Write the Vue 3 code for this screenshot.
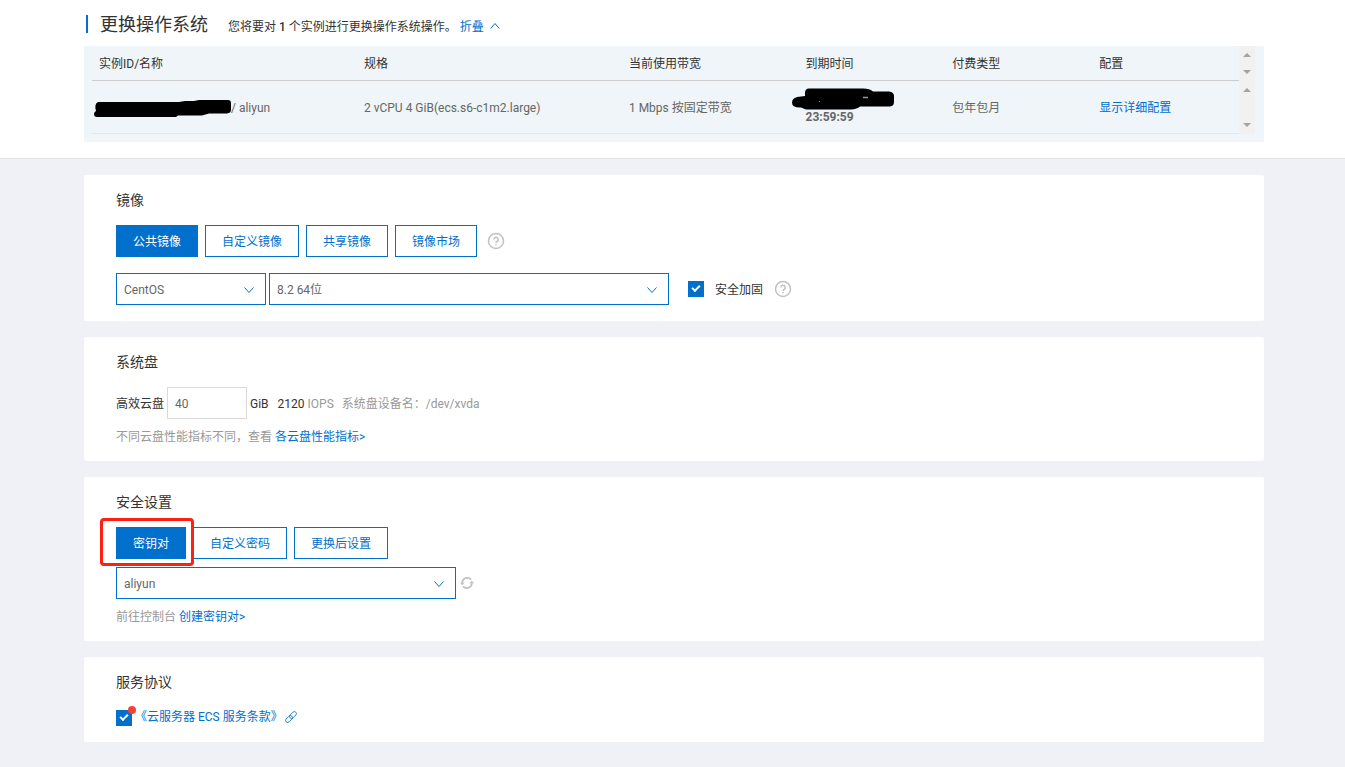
<script setup>
import { ref } from 'vue'

const columns = ['实例ID/名称', '规格', '当前使用带宽', '到期时间', '付费类型', '配置']
const imageTypes = ['公共镜像', '自定义镜像', '共享镜像', '镜像市场']
const loginTypes = ['密钥对', '自定义密码', '更换后设置']

const imageType = ref(0)
const loginType = ref(0)
const system = ref('CentOS')
const version = ref('8.2 64位')
const keyPair = ref('aliyun')
const diskSize = ref('40')
const hardened = ref(true)
const agreed = ref(true)
</script>

<template>
  <header class="top">
    <div class="wrap">
      <div class="heading">
        <h1>更换操作系统</h1>
        <p>您将要对 <b>1</b> 个实例进行更换操作系统操作。</p>
        <button type="button" class="fold">
          折叠
          <svg width="10" height="8" viewBox="0 0 10 8"><path d="M.7 6.500L5 1.500l4.300 5" fill="none" stroke="currentColor" /></svg>
        </button>
      </div>
      <div class="instances">
        <table>
          <thead>
            <tr><th v-for="c in columns" :key="c" scope="col">{{ c }}</th></tr>
          </thead>
          <tbody>
            <tr>
              <td>
                <span class="masked-id">
                  <svg class="id-stroke" width="140" height="20" viewBox="0 0 140 20">
                    <path d="M5 4H86L92 3H101L106 2H135Q138 2 138 5V12Q138 15 134 15.500H116L109 17.500H85L83 19H4Q1 19 1 16Q1 14 3 13Q1 6 5 4Z" />
                  </svg>
                </span>/ aliyun
              </td>
              <td>2 vCPU 4 GiB(ecs.s6-c1m2.large)</td>
              <td>1 Mbps 按固定带宽</td>
              <td>
                <div class="expiry">
                  <svg class="date-stroke" width="104" height="24" viewBox="0 0 104 24">
                    <path d="M18 1.500H72Q79 1.500 82 4.500H98Q103 5 103 9V15Q103 19 99 19.500H69Q66 22 60 22.500H15L10 20.500Q1 21 1 15.500Q1 10 10 9.500L14 9V6Q14 1.500 18 1.500Z" />
                    <path d="M72 10.500H77" stroke="#999" stroke-width="1.500" />
                    <path d="M28 14.500H29" stroke="#777" />
                  </svg>
                  <b>23:59:59</b>
                </div>
              </td>
              <td>包年包月</td>
              <td><a href="#">显示详细配置</a></td>
            </tr>
          </tbody>
        </table>
        <div class="tracks" aria-hidden="true">
          <div class="track head"><i class="up"></i><i class="down"></i></div>
          <div class="track body"><i class="up"></i><i class="down"></i></div>
        </div>
      </div>
    </div>
  </header>

  <main class="wrap cards">
    <section class="card">
      <h2>镜像</h2>
      <div class="row">
        <button v-for="(t, i) in imageTypes" :key="t" type="button" class="tab" :class="{ active: imageType === i }" @click="imageType = i">{{ t }}</button>
        <svg class="help" width="18" height="18" viewBox="0 0 18 18"><circle cx="9" cy="9" r="7.500" /><path d="M6.800 7.400a2.200 2.200 0 1 1 3.300 1.900c-.8.500-1.100.8-1.100 1.700M9 12v1.300" /></svg>
      </div>
      <div class="row selects">
        <div class="select system">
          <select v-model="system" aria-label="操作系统"><option>CentOS</option></select>
          <svg width="12" height="8" viewBox="0 0 12 8"><path d="M1.500 1.500l4.500 5 4.500-5" /></svg>
        </div>
        <div class="select version">
          <select v-model="version" aria-label="版本"><option>8.2 64位</option></select>
          <svg width="12" height="8" viewBox="0 0 12 8"><path d="M1.500 1.500l4.500 5 4.500-5" /></svg>
        </div>
        <label class="check harden"><input v-model="hardened" type="checkbox" /><span>安全加固</span></label>
        <svg class="help" width="18" height="18" viewBox="0 0 18 18"><circle cx="9" cy="9" r="7.500" /><path d="M6.800 7.400a2.200 2.200 0 1 1 3.300 1.900c-.8.500-1.100.8-1.100 1.700M9 12v1.300" /></svg>
      </div>
    </section>

    <section class="card">
      <h2>系统盘</h2>
      <div class="row disk">
        <label for="disk">高效云盘</label>
        <input id="disk" v-model="diskSize" type="text" />
        <span>GiB</span>
        <span class="iops">2120 <em>IOPS</em></span>
        <em class="device">系统盘设备名：/dev/xvda</em>
      </div>
      <p class="hint">不同云盘性能指标不同，查看 <a href="#">各云盘性能指标&gt;</a></p>
    </section>

    <section class="card">
      <h2>安全设置</h2>
      <div class="row login">
        <button v-for="(t, i) in loginTypes" :key="t" type="button" class="tab" :class="{ active: loginType === i }" @click="loginType = i">{{ t }}</button>
        <span class="marker"></span>
      </div>
      <div class="row keys">
        <div class="select pair">
          <select v-model="keyPair" aria-label="密钥对"><option>aliyun</option></select>
          <svg width="12" height="8" viewBox="0 0 12 8"><path d="M1.500 1.500l4.500 5 4.500-5" /></svg>
        </div>
        <button type="button" class="refresh" aria-label="刷新">
          <svg width="14" height="14" viewBox="0 0 14 14"><path d="M2.200 6.500a5 5 0 0 1 8.800-2.800M11.800 7.500a5 5 0 0 1-8.800 2.800" fill="none" stroke="#c1c1c1" stroke-width="1.800" /><path d="M0 6.500h4.600L2.200 9.500zM14 7.500H9.400L11.800 4.500z" fill="#c1c1c1" /></svg>
        </button>
      </div>
      <p class="hint">前往控制台 <a href="#">创建密钥对&gt;</a></p>
    </section>

    <section class="card">
      <h2>服务协议</h2>
      <div class="row agreement">
        <span class="check dotted"><input v-model="agreed" type="checkbox" aria-label="同意服务条款" /></span>
        <a href="#">《云服务器 ECS 服务条款》
          <svg width="12" height="12" viewBox="0 0 12 12"><g fill="none" stroke="currentColor" stroke-width=".8" transform="rotate(-45 6 6)"><rect x="-.8" y="4" width="8" height="4" rx="2" /><rect x="4.800" y="4" width="8" height="4" rx="2" /></g></svg>
        </a>
      </div>
    </section>
  </main>
</template>

<style>
body {
  margin: 0;
  background: #eff1f6;
}
</style>

<style scoped>
.top, .cards {
  font: 12px/18px Roboto, "Noto Sans CJK SC", sans-serif;
  color: #333;
}
.top {
  background: #fff;
  border-bottom: 1px solid #e5e5e5;
  padding-bottom: 16px;
}
.wrap {
  margin: 0 81px 0 84px;
}
h1, h2, p {
  margin: 0;
  font-weight: 400;
}
a {
  color: #0070cc;
  text-decoration: none;
}
em {
  font-style: normal;
  color: #999;
}
button {
  font: inherit;
  cursor: pointer;
}
.heading {
  display: flex;
  align-items: center;
  height: 46px;
  padding: 2px 0 0 2px;
  box-sizing: border-box;
}
.heading h1 {
  font-size: 18px;
  line-height: 20px;
  height: 18px;
  border-left: 2px solid #0070cc;
  padding-left: 12px;
  margin-right: 20px;
}
.heading p {
  padding-top: 6px;
}
.heading b {
  font-weight: 500;
}
.fold {
  display: flex;
  align-items: center;
  gap: 6px;
  padding: 6px 0 0;
  margin-left: 3px;
  border: 0;
  background: none;
  color: #0070cc;
}
.fold svg {
  margin-bottom: 2px;
}
.instances {
  display: flex;
  align-items: flex-start;
  background: #eff5f8;
  padding: 0 9px 8px 8px;
}
table {
  flex: 1;
  table-layout: fixed;
  border-collapse: separate;
  border-spacing: 0;
}
th, td {
  box-sizing: border-box;
  text-align: left;
  font-weight: 400;
  padding: 2px 0 0 7px;
  width: 12.8%;
}
th {
  height: 35px;
  border-bottom: 1px solid #ccc;
}
td {
  height: 53px;
  border-bottom: 1px solid #e3e8ea;
  color: #666;
}
th:nth-child(-n+2) {
  width: 23.1%;
}
th:nth-child(3) {
  width: 15.4%;
}
.masked-id {
  display: inline-block;
  position: relative;
  width: 132px;
  height: 12px;
}
.id-stroke {
  position: absolute;
  left: -6px;
  top: -2px;
}
.expiry {
  position: relative;
  padding-top: 18px;
}
.date-stroke {
  position: absolute;
  left: -15px;
  top: -3px;
}
.tracks {
  width: 16px;
}
.track {
  display: flex;
  flex-direction: column;
  align-items: center;
  justify-content: space-between;
  box-sizing: border-box;
  padding: 7px 0;
  background: #f1f1f1;
}
.track.head {
  height: 35px;
}
.track.body {
  height: 53px;
}
.track i {
  border: 4px solid transparent;
}
.track .up {
  border-top: 0;
  border-bottom-color: #a3a3a3;
}
.track .down {
  border-bottom: 0;
  border-top-color: #a3a3a3;
}
.cards {
  display: flex;
  flex-direction: column;
  gap: 16px;
  padding: 16px 0 24px;
}
.card {
  background: #fff;
  border-radius: 2px;
  padding: 16px 32px;
}
h2 {
  font-size: 14px;
  line-height: 18px;
  margin-bottom: 16px;
}
.row {
  display: flex;
  align-items: center;
  position: relative;
}
.tab {
  height: 32px;
  padding: 2px 16px 0;
  margin-right: 7px;
  border: 1px solid #0070cc;
  background: #fff;
  color: #0070cc;
}
.tab.active {
  background: #0070cc;
  color: #fff;
}
.help {
  fill: none;
  stroke: #c1c1c1;
  stroke-width: 1.500;
  margin-left: 3px;
}
.selects {
  margin-top: 16px;
}
.select {
  position: relative;
  margin-right: 3px;
}
.select select {
  appearance: none;
  width: 100%;
  height: 32px;
  padding: 2px 28px 0 7px;
  border: 1px solid #0070cc;
  border-radius: 0;
  background: #fff;
  color: #666;
  font: inherit;
  display: block;
}
.select svg {
  position: absolute;
  right: 11px;
  top: 13px;
  fill: none;
  stroke: #0070cc;
  stroke-width: 1;
  pointer-events: none;
}
.system {
  width: 150px;
}
.version {
  width: 400px;
}
.pair {
  width: 340px;
}
.check {
  display: flex;
  align-items: center;
  gap: 11px;
  position: relative;
}
.check span {
  padding-top: 2px;
}
.check input {
  appearance: none;
  width: 16px;
  height: 16px;
  margin: 0;
  border: 1px solid #0070cc;
  background: #fff;
  position: relative;
}
.check input:checked {
  background: #0070cc;
}
.check input:checked::after {
  content: "";
  position: absolute;
  left: 3px;
  top: 3px;
  width: 6px;
  height: 3px;
  border: solid #fff;
  border-width: 0 0 2px 2px;
  transform: rotate(-45deg);
}
.harden {
  margin: 0 8px 0 16px;
}
.disk label, .disk span, .disk .device {
  padding-top: 2px;
}
.disk input {
  box-sizing: border-box;
  width: 80px;
  height: 32px;
  margin: 0 3px;
  padding: 2px 7px 0;
  border: 1px solid #d9d9d9;
  font: inherit;
  color: #666;
}
.iops {
  margin-left: 9px;
}
.device {
  margin-left: 8px;
}
.hint {
  margin-top: 9px;
  margin-bottom: -1px;
  color: #999;
}
.marker {
  position: absolute;
  left: -16px;
  top: -9px;
  width: 88px;
  height: 42px;
  border: 3px solid #ff2014;
  border-radius: 4px;
  pointer-events: none;
}
.keys {
  margin-top: 8px;
}
.refresh {
  display: flex;
  padding: 0;
  margin-left: 1px;
  border: 0;
  background: none;
}
.agreement {
  height: 19px;
  align-items: flex-end;
}
.agreement a {
  display: flex;
  align-items: center;
  gap: 2px;
  margin-left: 3px;
}
.dotted::after {
  content: "";
  position: absolute;
  left: 12px;
  top: -4px;
  width: 8px;
  height: 8px;
  border-radius: 50%;
  background: #f44336;
}
</style>
